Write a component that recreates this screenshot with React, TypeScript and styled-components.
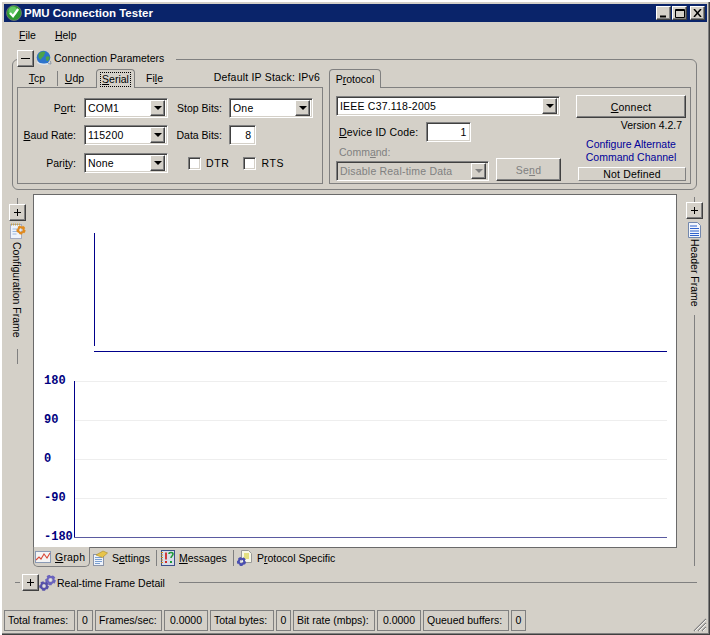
import React from "react";
import styled, { createGlobalStyle, css } from "styled-components";

const Global = createGlobalStyle`
  html, body { margin: 0; padding: 0; background: #d4d0c8; }
  body { font-family: "Liberation Sans", Arial, sans-serif; font-size: 10.5px; color: #000; }
  u { text-underline-offset: 1px; }
`;

const raised = css`
  border: 1px solid;
  border-color: #fff #404040 #404040 #fff;
  box-shadow: inset -1px -1px #808080;
  background: #d4d0c8;
`;
const sunken = css`
  border: 1px solid;
  border-color: #808080 #fff #fff #808080;
  box-shadow: inset 1px 1px #404040, inset -1px -1px #d4d0c8;
  background: #fff;
`;

const Win = styled.div`
  box-sizing: border-box;
  width: 710px;
  height: 635px;
  padding: 4px;
  display: flex;
  flex-direction: column;
  overflow: hidden;
  position: relative;
  background: #d4d0c8;
  box-shadow: inset 2px 2px #fff, inset -1px -1px #404040, inset -2px -2px #808080;
`;
const TitleBar = styled.div`
  flex: none;
  height: 18px;
  margin-right: -1px;
  background: #0a246a;
  display: flex;
  align-items: center;
  padding: 0 2px 0 2px;
  color: #fff;
  font-weight: bold;
  font-size: 11.5px;
  gap: 2px;
`;
const TitleText = styled.span`
  flex: 1;
`;
const CapBtns = styled.div`
  display: flex;
`;
const CapBtn = styled.div<{ $gap?: number }>`
  ${raised}
  box-sizing: border-box;
  width: 15px;
  height: 14px;
  margin-left: ${(p) => p.$gap ?? 0}px;
  display: flex;
  align-items: center;
  justify-content: center;
`;
const MenuBar = styled.div`
  flex: none;
  height: 28px;
  display: flex;
  align-items: center;
  gap: 19px;
  padding: 0 0 2px 15px;
  box-sizing: border-box;
`;
const Group = styled.fieldset`
  flex: none;
  margin: 0 9px 0 8px;
  padding: 1px 4px 5px 4px;
  min-width: 0;
  border: 1px solid #808080;
  border-radius: 6px;
  display: flex;
  gap: 6px;
  box-sizing: border-box;
  height: 140px;
`;
const GroupLegend = styled.legend`
  display: flex;
  align-items: flex-start;
  height: 18px;
  margin-left: 0;
  padding: 0 12px 0 0;
  gap: 2px;
`;
const LegendText = styled.span`
  line-height: 16px;
`;
const Expander = styled.button`
  ${raised}
  box-sizing: border-box;
  width: 17px;
  height: 17px;
  padding: 0;
  flex: none;
  display: flex;
  align-items: center;
  justify-content: center;
  color: #000;
`;
const PanelCol = styled.div<{ $w: number }>`
  width: ${(p) => p.$w}px;
  flex: none;
  display: flex;
  flex-direction: column;
`;
const TabRow = styled.div`
  height: 18px;
  display: flex;
  align-items: flex-end;
  position: relative;
  z-index: 1;
`;
const FlatTab = styled.div<{ $w: number; $sep?: boolean }>`
  width: ${(p) => p.$w}px;
  height: 15px;
  line-height: 15px;
  margin-bottom: 1px;
  text-align: center;
  box-sizing: border-box;
  border-right: ${(p) => (p.$sep ? "1px solid #808080" : "1px solid transparent")};
`;
const ActiveTab = styled.div<{ $w: number; $ml?: number }>`
  box-sizing: border-box;
  width: ${(p) => p.$w}px;
  height: 19px;
  margin-left: ${(p) => p.$ml ?? 0}px;
  margin-bottom: -1px;
  border: 1px solid #808080;
  border-bottom: 0;
  border-radius: 4px 4px 0 0;
  background: #d4d0c8;
  display: flex;
  align-items: center;
  justify-content: center;
`;
const Focus = styled.span`
  outline: 1px dotted #000;
  padding: 0 1px;
  line-height: 13px;
`;
const StackNote = styled.div`
  margin-left: auto;
  padding: 0 3px 2px 0;
  line-height: 15px;
  letter-spacing: 0.2px;
`;
const Panel = styled.div`
  box-sizing: border-box;
  height: 97px;
  border: 1px solid #808080;
`;
const SerialGrid = styled(Panel)`
  display: grid;
  grid-template-columns: 66px 84px 61px 84px;
  grid-template-rows: 27px 28px 20px;
  padding: 10px 0 0 0;
`;
const Label = styled.label<{ $disabled?: boolean; $pr?: number }>`
  display: flex;
  align-items: center;
  justify-content: flex-end;
  height: 20px;
  padding-right: ${(p) => p.$pr ?? 8}px;
  white-space: nowrap;
  color: ${(p) => (p.$disabled ? "#808080" : "#000")};
`;
const ComboBox = styled.div<{ $w: number; $disabled?: boolean }>`
  ${sunken}
  box-sizing: border-box;
  width: ${(p) => p.$w}px;
  height: 20px;
  display: flex;
  align-items: center;
  padding: 2px;
  background: ${(p) => (p.$disabled ? "#d4d0c8" : "#fff")};
  color: ${(p) => (p.$disabled ? "#808080" : "#000")};
`;
const ComboText = styled.span`
  flex: 1;
  padding-left: 1px;
  letter-spacing: 0.2px;
  white-space: nowrap;
  overflow: hidden;
`;
const ArrowBtn = styled.div`
  ${raised}
  box-sizing: border-box;
  width: 15px;
  height: 16px;
  flex: none;
  display: flex;
  align-items: center;
  justify-content: center;
`;
const Arrow = styled.i<{ $disabled?: boolean }>`
  width: 0;
  height: 0;
  border-left: 4px solid transparent;
  border-right: 4px solid transparent;
  border-top: 4px solid ${(p) => (p.$disabled ? "#808080" : "#000")};
`;
const NumInput = styled.div<{ $w: number }>`
  ${sunken}
  box-sizing: border-box;
  width: ${(p) => p.$w}px;
  height: 20px;
  line-height: 18px;
  text-align: right;
  padding-right: 4px;
`;
const CheckRow = styled.div`
  grid-column: 3 / 5;
  display: flex;
  align-items: center;
  height: 20px;
  padding-left: 20px;
`;
const Check = styled.div<{ $ml?: number }>`
  ${sunken}
  box-sizing: border-box;
  width: 13px;
  height: 13px;
  margin-left: ${(p) => p.$ml ?? 0}px;
  flex: none;
`;
const CheckText = styled.span`
  margin-left: 5px;
  letter-spacing: 0.6px;
`;
const ProtocolPanel = styled(Panel)`
  display: flex;
  padding: 8px 0 0 6px;
`;
const ProtoLeft = styled.div`
  width: 240px;
  display: flex;
  flex-direction: column;
`;
const ProtoRight = styled.div`
  width: 110px;
  display: flex;
  flex-direction: column;
  align-items: stretch;
  margin-top: -1px;
`;
const IdRow = styled.div`
  display: flex;
  align-items: center;
  gap: 8px;
  margin-top: 6px;
  padding-left: 3px;
  letter-spacing: 0.2px;
`;
const CmdLabel = styled(Label)`
  justify-content: flex-start;
  height: 14px;
  margin: 3px 0 -1px 3px;
`;
const CmdRow = styled.div`
  display: flex;
  align-items: flex-end;
  gap: 7px;
`;
const PushBtn = styled.button<{ $w: number; $h: number; $disabled?: boolean }>`
  ${raised}
  box-sizing: border-box;
  width: ${(p) => p.$w}px;
  height: ${(p) => p.$h}px;
  padding: 0;
  font: inherit;
  letter-spacing: 0.2px;
  color: ${(p) => (p.$disabled ? "#808080" : "#000")};
`;
const VersionText = styled.div`
  text-align: right;
  padding-right: 4px;
  line-height: 13px;
  margin-top: 1px;
`;
const LinkText = styled.div`
  text-align: center;
  color: #000099;
  line-height: 13px;
  margin-top: 6px;
`;
const StatusMini = styled.div`
  box-sizing: border-box;
  margin: 3px 0 0 2px;
  height: 14px;
  line-height: 13px;
  text-align: center;
  border: 1px solid;
  border-color: #fff #808080 #808080 #fff;
  background: #d4d0c8;
  letter-spacing: 0.2px;
`;
const Middle = styled.div`
  flex: none;
  display: flex;
  height: 373px;
  margin-top: 4px;
`;
const Strip = styled.div<{ $w: number; $pl: number }>`
  flex: none;
  width: ${(p) => p.$w}px;
  box-sizing: border-box;
  padding-left: ${(p) => p.$pl}px;
  display: flex;
  flex-direction: column;
  align-items: flex-start;
`;
const StripTick = styled.div<{ $h: number; $mt?: number; $ml?: number }>`
  width: 1px;
  height: ${(p) => p.$h}px;
  margin-top: ${(p) => p.$mt ?? 0}px;
  margin-left: ${(p) => p.$ml ?? 8}px;
  background: #808080;
  flex: none;
`;
const StripIcon = styled.div<{ $mt: number; $ml: number }>`
  margin: ${(p) => p.$mt}px 0 0 ${(p) => p.$ml}px;
  height: 16px;
  flex: none;
`;
const StripText = styled.div<{ $mt: number; $ml: number }>`
  writing-mode: vertical-rl;
  margin: ${(p) => p.$mt}px 0 0 ${(p) => p.$ml}px;
  line-height: 13px;
  white-space: nowrap;
  flex: none;
`;
const CenterCol = styled.div`
  width: 644px;
  flex: none;
  display: flex;
  flex-direction: column;
`;
const Canvas = styled.div`
  box-sizing: border-box;
  height: 354px;
  background: #fff;
  border: 1px solid #6a6a6a;
  display: flex;
`;
const BottomTabs = styled.div`
  display: flex;
  align-items: flex-start;
  height: 19px;
`;
const GraphTab = styled.div`
  box-sizing: border-box;
  width: 57px;
  height: 20px;
  margin: -1px 0 0 0;
  background: #d4d0c8;
  border: 1px solid #808080;
  border-top: 0;
  border-radius: 0 0 5px 5px;
  display: flex;
  align-items: center;
  gap: 4px;
  padding: 1px 0 0 1px;
  position: relative;
  letter-spacing: 0.2px;
`;
const BottomTab = styled.div<{ $w: number; $sep?: boolean; $gap?: number }>`
  box-sizing: border-box;
  width: ${(p) => p.$w}px;
  height: 16px;
  margin-top: 2px;
  display: flex;
  align-items: center;
  gap: ${(p) => p.$gap ?? 4}px;
  padding-left: 3px;
  white-space: nowrap;
  border-right: ${(p) => (p.$sep ? "1px solid #808080" : "0")};
`;
const DetailRow = styled.div`
  flex: none;
  display: flex;
  align-items: center;
  height: 17px;
  margin-top: 7px;
  padding-left: 11px;
`;
const Dash = styled.div<{ $w?: number; $grow?: boolean; $mr?: number; $ml?: number }>`
  height: 1px;
  background: #808080;
  width: ${(p) => (p.$w ? `${p.$w}px` : "auto")};
  flex: ${(p) => (p.$grow ? 1 : "none")};
  margin-right: ${(p) => p.$mr ?? 0}px;
  margin-left: ${(p) => p.$ml ?? 0}px;
`;
const DetailText = styled.span`
  margin-left: 1px;
  white-space: nowrap;
`;
const StatusBar = styled.div`
  flex: none;
  display: flex;
  gap: 2px;
  height: 21px;
  margin-top: auto;
  position: relative;
`;
const StatusCell = styled.div<{ $w: number; $label?: boolean }>`
  box-sizing: border-box;
  width: ${(p) => p.$w}px;
  height: 21px;
  border: 1px solid #808080;
  line-height: 19px;
  text-align: ${(p) => (p.$label ? "left" : "center")};
  padding-left: ${(p) => (p.$label ? 3 : 0)}px;
  white-space: nowrap;
`;
const Grip = styled.svg`
  position: absolute;
  right: -1px;
  bottom: -1px;
`;
const ChartSvg = styled.svg`
  display: block;
  flex: none;
`;
const AxisLabel = styled.text`
  font-family: "Liberation Mono", monospace;
  font-weight: bold;
  font-size: 12px;
  fill: #000080;
`;

const Minus = () => (
  <svg width="9" height="9" viewBox="0 0 9 9"><path d="M0 4.5h9" stroke="#000" /></svg>
);
const Plus = () => (
  <svg width="9" height="9" viewBox="0 0 9 9"><path d="M1 4.5h7M4.5 1v7" stroke="#000" /></svg>
);

const AppIcon = () => (
  <svg width="16" height="16" viewBox="0 0 16 16">
    <circle cx="8" cy="8" r="7.5" fill="#2f9a2f" stroke="#777" strokeWidth="0.8" />
    <circle cx="7" cy="6" r="4.5" fill="#62c862" />
    <path d="M4 8l3 3.2L12.2 4" fill="none" stroke="#fff" strokeWidth="2.2" />
  </svg>
);
const GlobeIcon = () => (
  <svg width="16" height="16" viewBox="0 0 16 16">
    <circle cx="7.5" cy="7.5" r="6.8" fill="#2d74cc" />
    <path d="M3 3.5c2-2 5-2.5 6-1.5s-1 2-1 3.5-2 1.5-2.5 3-1.5 1-2.5-.5-.5-3 0-4.5zM10 7c1-.8 3-1 3.5 0s-.8 3.5-2 4-2-3-1.5-4z" fill="#4da34a" />
    <path d="M1 12c3 2.5 9 3.2 13.5.8" fill="none" stroke="#dfe6ee" strokeWidth="1.4" />
    <path d="M12 13.5l3 .5-.5-3" fill="none" stroke="#7f8ea0" strokeWidth="0.8" />
  </svg>
);
const ChartIcon = () => (
  <svg width="16" height="12" viewBox="0 0 16 12">
    <rect x="0.5" y="0.5" width="15" height="11" fill="#f4f4f4" stroke="#8a9ab5" />
    <path d="M1 9l3-3 2 2 3-5 3 4 3-5" fill="none" stroke="#d94a3a" strokeWidth="1.1" />
  </svg>
);
const SettingsIcon = () => (
  <svg width="15" height="16" viewBox="0 0 15 16">
    <rect x="0.5" y="4.5" width="10" height="11" fill="#eef3fb" stroke="#8b94a8" />
    <path d="M2 7.5h7M2 9.5h7M2 11.5h7M2 13.5h5" stroke="#7a9fd0" />
    <path d="M3 5l7-4 4.5 2-5 4.5z" fill="#e7c44b" stroke="#a88a2a" strokeWidth="0.6" />
  </svg>
);
const MessagesIcon = () => (
  <svg width="15" height="16" viewBox="0 0 15 16">
    <rect x="1.5" y="0.5" width="13" height="15" fill="#d8dde8" stroke="#3c4f8a" />
    <path d="M1 2.5h2M1 5h2M1 7.5h2M1 10h2M1 12.5h2" stroke="#c98a1a" strokeWidth="1.2" />
    <path d="M6 2.5v7" stroke="#d02a2a" strokeWidth="1.8" />
    <rect x="5" y="11" width="2" height="2" fill="#d02a2a" />
    <path d="M9 4c0-2 4-2 4 0s-2 2-2 4" fill="none" stroke="#1f9a3a" strokeWidth="1.6" />
    <rect x="10" y="11" width="2" height="2" fill="#1f9a3a" />
  </svg>
);
const Gear = ({ cx, cy, r, fill }: { cx: number; cy: number; r: number; fill: string }) => (
  <g>
    <circle cx={cx} cy={cy} r={r} fill="none" stroke={fill} strokeWidth={r * 0.7} strokeDasharray={`${r * 0.75} ${r * 0.5}`} />
    <circle cx={cx} cy={cy} r={r * 0.8} fill="none" stroke={fill} strokeWidth={r * 0.55} />
    <circle cx={cx} cy={cy} r={r * 0.28} fill="#dfe3f6" />
  </g>
);
const ProtocolIcon = () => (
  <svg width="15" height="16" viewBox="0 0 15 16">
    <path d="M4.5 0.5h7l3 3v9h-10z" fill="#f7f7e6" stroke="#9a9a9a" />
    <path d="M7 4h5M7 6h5M7 8h5" stroke="#d0c81e" />
    <Gear cx={4.5} cy={11.5} r={3.4} fill="#4a4fb0" />
  </svg>
);
const GearsIcon = () => (
  <svg width="17" height="16" viewBox="0 0 17 16">
    <Gear cx={11.5} cy={5} r={3.9} fill="#6a63bd" />
    <Gear cx={5} cy={11} r={3.6} fill="#5550aa" />
  </svg>
);
const ConfigIcon = () => (
  <svg width="16" height="16" viewBox="0 0 16 16">
    <rect x="0.5" y="1.5" width="11" height="14" fill="#eef3fb" stroke="#a4abc0" />
    <path d="M1 1.5h10" stroke="#c9a44a" strokeWidth="2" strokeDasharray="1 1" />
    <path d="M2.5 6h7M2.5 8.5h5M2.5 11h4" stroke="#9db8de" />
    <Gear cx={11} cy={7} r={3.4} fill="#e08a1e" />
  </svg>
);
const HeaderIcon = () => (
  <svg width="13" height="16" viewBox="0 0 13 16">
    <path d="M0.5 0.5h9l3 3v12h-12z" fill="#f2f6fd" stroke="#7388ad" />
    <path d="M2 4h7M2 6.5h9M2 9h9M2 11.5h9M2 13.5h9" stroke="#2f62cc" />
  </svg>
);

const Combo = ({ w, text, disabled }: { w: number; text: string; disabled?: boolean }) => (
  <ComboBox $w={w} $disabled={disabled}>
    <ComboText>{text}</ComboText>
    <ArrowBtn><Arrow $disabled={disabled} /></ArrowBtn>
  </ComboBox>
);

const gridLines = [186, 225, 264, 303];

const Chart = () => (
  <ChartSvg width="642" height="352" viewBox="0 0 642 352">
    <path d="M60.5 38v113" stroke="#00008b" />
    <path d="M60 156.5h573" stroke="#00008b" />
    {gridLines.map((y) => (
      <path key={y} d={`M41 ${y + 0.5}H633`} stroke="#eeeeee" />
    ))}
    <path d="M40.5 186v157" stroke="#00008b" />
    <path d="M40 342.5h593" stroke="#5a5aa0" />
    <AxisLabel x="10" y="189">180</AxisLabel>
    <AxisLabel x="10" y="228">90</AxisLabel>
    <AxisLabel x="10" y="267">0</AxisLabel>
    <AxisLabel x="10" y="306">-90</AxisLabel>
    <AxisLabel x="10" y="345">-180</AxisLabel>
  </ChartSvg>
);

export default function App() {
  return (
    <Win>
      <Global />
      <TitleBar>
        <AppIcon />
        <TitleText>PMU Connection Tester</TitleText>
        <CapBtns>
          <CapBtn>
            <svg width="9" height="9" viewBox="0 0 9 9"><path d="M1 7.5h6" stroke="#000" strokeWidth="2" /></svg>
          </CapBtn>
          <CapBtn $gap={1}>
            <svg width="10" height="9" viewBox="0 0 10 9"><path d="M0.5 0.5h9v8h-9zM0 1.5h10" fill="none" stroke="#000" /></svg>
          </CapBtn>
          <CapBtn $gap={3}>
            <svg width="9" height="8" viewBox="0 0 9 8"><path d="M1 0l7 8M8 0L1 8" stroke="#000" strokeWidth="1.5" /></svg>
          </CapBtn>
        </CapBtns>
      </TitleBar>
      <MenuBar>
        <span><u>F</u>ile</span>
        <span><u>H</u>elp</span>
      </MenuBar>
      <Group>
        <GroupLegend>
          <Expander><Minus /></Expander>
          <GlobeIcon />
          <LegendText>Connection Parameters</LegendText>
        </GroupLegend>
        <PanelCol $w={306}>
          <TabRow>
            <FlatTab $w={41} $sep><u>T</u>cp</FlatTab>
            <FlatTab $w={34}><u>U</u>dp</FlatTab>
            <ActiveTab $w={39} $ml={4}><Focus><u>S</u>erial</Focus></ActiveTab>
            <FlatTab $w={40}>Fi<u>l</u>e</FlatTab>
            <StackNote>Default IP Stack: IPv6</StackNote>
          </TabRow>
          <SerialGrid>
            <Label>P<u>o</u>rt:</Label>
            <Combo w={84} text="COM1" />
            <Label $pr={7}>Stop Bits:</Label>
            <Combo w={84} text="One" />
            <Label><u>B</u>aud Rate:</Label>
            <Combo w={84} text="115200" />
            <Label $pr={7}>Data Bits:</Label>
            <NumInput $w={27}>8</NumInput>
            <Label>Pari<u>t</u>y:</Label>
            <Combo w={84} text="None" />
            <CheckRow>
              <Check />
              <CheckText>DTR</CheckText>
              <Check $ml={14} />
              <CheckText>RTS</CheckText>
            </CheckRow>
          </SerialGrid>
        </PanelCol>
        <PanelCol $w={362}>
          <TabRow>
            <ActiveTab $w={52}>
              <span>P<u>r</u>otocol</span>
            </ActiveTab>
          </TabRow>
          <ProtocolPanel>
            <ProtoLeft>
              <Combo w={224} text="IEEE C37.118-2005" />
              <IdRow>
                <span><u>D</u>evice ID Code:</span>
                <NumInput $w={45}>1</NumInput>
              </IdRow>
              <CmdLabel $disabled>Comm<u>a</u>nd:</CmdLabel>
              <CmdRow>
                <Combo w={153} text="Disable Real-time Data" disabled />
                <PushBtn $w={65} $h={23} $disabled>Se<u>n</u>d</PushBtn>
              </CmdRow>
            </ProtoLeft>
            <ProtoRight>
              <PushBtn $w={110} $h={23}><u>C</u>onnect</PushBtn>
              <VersionText>Version 4.2.7</VersionText>
              <LinkText>Configure Alternate<br />Command Channel</LinkText>
              <StatusMini>Not Defined</StatusMini>
            </ProtoRight>
          </ProtocolPanel>
        </PanelCol>
      </Group>
      <Middle>
        <Strip $w={29} $pl={5}>
          <StripTick $h={6} $mt={4} />
          <Expander><Plus /></Expander>
          <StripIcon $mt={2} $ml={1}><ConfigIcon /></StripIcon>
          <StripText $mt={3} $ml={1}>Configuration Frame</StripText>
          <StripTick $h={15} $mt={11} />
        </Strip>
        <CenterCol>
          <Canvas><Chart /></Canvas>
          <BottomTabs>
            <GraphTab><ChartIcon /><span><u>G</u>raph</span></GraphTab>
            <BottomTab $w={67} $sep><SettingsIcon /><span>S<u>e</u>ttings</span></BottomTab>
            <BottomTab $w={77} $sep><MessagesIcon /><span><u>M</u>essages</span></BottomTab>
            <BottomTab $w={110} $gap={5}><ProtocolIcon /><span>P<u>r</u>otocol Specific</span></BottomTab>
          </BottomTabs>
        </CenterCol>
        <Strip $w={29} $pl={9}>
          <StripTick $h={5} $mt={3} />
          <Expander><Plus /></Expander>
          <StripIcon $mt={3} $ml={2}><HeaderIcon /></StripIcon>
          <StripText $mt={1} $ml={2}>Header Frame</StripText>
          <StripTick $h={251} $mt={8} />
        </Strip>
      </Middle>
      <DetailRow>
        <Dash $w={5} $mr={2} />
        <Expander><Plus /></Expander>
        <GearsIcon />
        <DetailText>Real-time Frame Detail</DetailText>
        <Dash $grow $ml={14} $mr={9} />
      </DetailRow>
      <StatusBar>
        <StatusCell $w={71} $label>Total frames:</StatusCell>
        <StatusCell $w={16}>0</StatusCell>
        <StatusCell $w={67} $label>Frames/sec:</StatusCell>
        <StatusCell $w={44}>0.0000</StatusCell>
        <StatusCell $w={64} $label>Total bytes:</StatusCell>
        <StatusCell $w={15}>0</StatusCell>
        <StatusCell $w={82} $label>Bit rate (mbps):</StatusCell>
        <StatusCell $w={44}>0.0000</StatusCell>
        <StatusCell $w={86} $label>Queued buffers:</StatusCell>
        <StatusCell $w={15}>0</StatusCell>
        <Grip width="15" height="15" viewBox="0 0 15 15">
          <path d="M2 14L14 2M6 14L14 6M10 14L14 10" stroke="#808080" strokeWidth="1.2" />
          <path d="M3 14L14 3M7 14L14 7M11 14L14 11" stroke="#fff" strokeWidth="0.8" />
        </Grip>
      </StatusBar>
    </Win>
  );
}
